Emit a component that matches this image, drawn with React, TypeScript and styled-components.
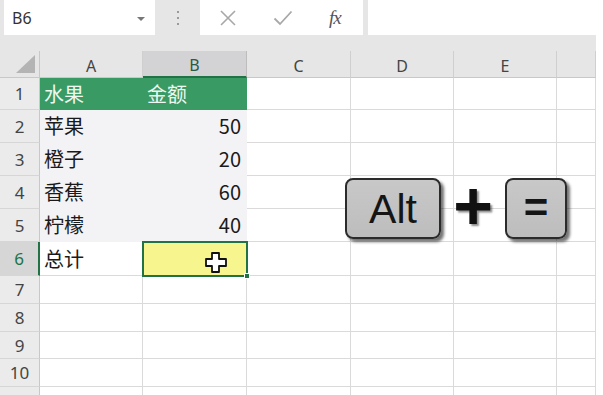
import React from "react";
import styled, { createGlobalStyle } from "styled-components";

const Global = createGlobalStyle`
  html, body { margin: 0; padding: 0; background: #ffffff; }
  body { width: 603px; height: 395px; overflow: hidden; font-family: "Noto Sans CJK SC", "Noto Sans", sans-serif; }
  * { box-sizing: border-box; }
`;

const GREEN = "#217346";

const Page = styled.div`
  position: relative;
  width: 596px;
  height: 395px;
  overflow: hidden;
  background: #ffffff;
`;

const Toolbar = styled.div`
  height: 51px;
  background: #e6e6e6;
  display: flex;
  align-items: flex-start;
  padding-left: 4px;
`;

const NameBox = styled.div`
  width: 151px;
  height: 35px;
  background: #ffffff;
  display: flex;
  align-items: center;
  justify-content: space-between;
  padding: 0 10px 0 8px;
  font-family: "Noto Sans", "Liberation Sans", sans-serif;
  font-size: 16px;
  color: #333;
`;

const Caret = styled.span`
  width: 0;
  height: 0;
  border-left: 4px solid transparent;
  border-right: 4px solid transparent;
  border-top: 4px solid #777;
  margin-top: 2px;
`;

const Grip = styled.div`
  width: 45px;
  height: 35px;
  display: flex;
  flex-direction: column;
  align-items: center;
  justify-content: center;
  gap: 4px;
`;

const GripDot = styled.span`
  width: 2px;
  height: 2px;
  background: #9a9a9a;
`;

const ButtonBox = styled.div`
  width: 163px;
  height: 35px;
  background: #ffffff;
  display: flex;
  align-items: center;
  padding-left: 17px;
  gap: 33px;
`;

const IconSlot = styled.span`
  width: 22px;
  height: 20px;
  display: flex;
  align-items: center;
  justify-content: center;
`;

const Fx = styled.span`
  font-family: "Liberation Serif", "DejaVu Serif", serif;
  font-style: italic;
  font-size: 19px;
  color: #555;
  margin-left: 2px;
  letter-spacing: -1px;
`;

const FormulaInput = styled.div`
  flex: 1;
  height: 35px;
  margin-left: 5px;
  background: #ffffff;
`;

const Sheet = styled.div`
  display: grid;
  grid-template-columns: 40px 103px 104px 104px 103px 103px 39px;
  grid-template-rows: 27px 32px 33px 33px 33px 33px 34px 28px 28px 27px 28px 20px;
  border-right: 1px solid #d4d4d4;
`;

const Corner = styled.div`
  background: #e6e6e6;
  border-right: 1px solid #c8c8c8;
  border-bottom: 1px solid #c8c8c8;
  display: flex;
  align-items: flex-end;
  justify-content: flex-end;
  padding: 0 4px 4px 0;
`;

const ColHead = styled.div<{ $active?: boolean }>`
  background: ${(p) => (p.$active ? "#d3d3d5" : "#e6e6e6")};
  border-right: 1px solid ${(p) => (p.$active ? "#bdbdbd" : "#cfcfcf")};
  border-bottom: ${(p) => (p.$active ? `2px solid ${GREEN}` : "1px solid #c8c8c8")};
  display: flex;
  align-items: flex-end;
  justify-content: center;
  padding-bottom: 1px;
  font-family: "Noto Sans", "Liberation Sans", sans-serif;
  font-size: 16px;
  line-height: 20px;
  color: ${(p) => (p.$active ? "#2c5a44" : "#444")};
`;

const RowHead = styled.div<{ $active?: boolean }>`
  background: ${(p) => (p.$active ? "#d6d6d6" : "#ebebeb")};
  border-right: ${(p) => (p.$active ? `2px solid ${GREEN}` : "1px solid #c8c8c8")};
  border-bottom: 1px solid #d6d6d6;
  display: flex;
  align-items: center;
  justify-content: center;
  font-family: "Noto Sans", "Liberation Sans", sans-serif;
  font-size: 17px;
  color: ${(p) => (p.$active ? GREEN : "#444")};
`;

type Fill = "none" | "header" | "band" | "yellow";

const fills: Record<Fill, string> = {
  none: "#ffffff",
  header: "#3a9a64",
  band: "#f3f3f5",
  yellow: "#f6f58e",
};

const Cell = styled.div<{ $fill?: Fill; $right?: boolean; $selected?: boolean }>`
  position: relative;
  background: ${(p) => fills[p.$fill || "none"]};
  border-right: 1px solid ${(p) => (p.$fill === "header" ? "#3a9a64" : p.$fill === "band" ? "#f3f3f5" : "#dadada")};
  border-bottom: 1px solid ${(p) => (p.$fill === "header" ? "#3a9a64" : p.$fill === "band" ? "#f3f3f5" : "#dadada")};
  display: flex;
  align-items: center;
  justify-content: ${(p) => (p.$right ? "flex-end" : "flex-start")};
  padding: 0 5px 0 4px;
  font-size: 20px;
  line-height: 24px;
  color: ${(p) => (p.$fill === "header" ? "#eef8f0" : "#1a1a1a")};
  white-space: nowrap;
  outline: ${(p) => (p.$selected ? `2px solid ${GREEN}` : "none")};
  outline-offset: -1px;
  z-index: ${(p) => (p.$selected ? 1 : 0)};
`;

const FillHandle = styled.span`
  position: absolute;
  right: -4px;
  bottom: -4px;
  width: 6px;
  height: 6px;
  background: ${GREEN};
  border: 1px solid #ffffff;
`;

const Cursor = styled.svg`
  position: absolute;
  left: 60px;
  top: 9px;
`;

const KeyRow = styled.div`
  position: absolute;
  left: 345px;
  top: 178px;
  display: flex;
  align-items: center;
`;

const Key = styled.div<{ $w: number }>`
  width: ${(p) => p.$w}px;
  height: 61px;
  background: linear-gradient(#c8c8c8, #bdbdbd);
  border: 2px solid #2b2b2b;
  border-radius: 8px;
  box-shadow: 3px 3px 3px rgba(0, 0, 0, 0.55);
  display: flex;
  align-items: center;
  justify-content: center;
  font-family: "Liberation Sans", Arial, sans-serif;
  color: #151515;
`;

const AltLabel = styled.span`
  font-size: 41px;
  line-height: 1;
  margin-top: 2px;
`;

const EqLabel = styled.span`
  font-size: 42px;
  font-weight: 700;
  line-height: 1;
  margin-top: -2px;
`;

const Plus = styled.span`
  width: 64px;
  text-align: center;
  font-family: "Liberation Sans", Arial, sans-serif;
  font-weight: 900;
  font-size: 68px;
  line-height: 1;
  color: #111;
  text-shadow: 2px 2px 2px rgba(0, 0, 0, 0.45);
  margin-top: -8px;
`;

const cols = ["A", "B", "C", "D", "E", ""];

const data: { a: string; b: string; fill: Fill }[] = [
  { a: "水果", b: "金额", fill: "header" },
  { a: "苹果", b: "50", fill: "band" },
  { a: "橙子", b: "20", fill: "band" },
  { a: "香蕉", b: "60", fill: "band" },
  { a: "柠檬", b: "40", fill: "band" },
  { a: "总计", b: "", fill: "none" },
];

export default function App() {
  const rows = [1, 2, 3, 4, 5, 6, 7, 8, 9, 10, 11];
  return (
    <Page>
      <Global />
      <Toolbar>
        <NameBox>
          <span>B6</span>
          <Caret />
        </NameBox>
        <Grip>
          <GripDot />
          <GripDot />
          <GripDot />
        </Grip>
        <ButtonBox>
          <IconSlot>
            <svg width="18" height="18" viewBox="0 0 18 18">
              <path d="M2 2 L16 16 M16 2 L2 16" stroke="#a8a8a8" strokeWidth="1.6" fill="none" />
            </svg>
          </IconSlot>
          <IconSlot>
            <svg width="20" height="16" viewBox="0 0 20 16">
              <path d="M1.5 8.5 L7 14 L18.5 1.5" stroke="#a8a8a8" strokeWidth="1.8" fill="none" />
            </svg>
          </IconSlot>
          <Fx>fx</Fx>
        </ButtonBox>
        <FormulaInput />
      </Toolbar>
      <Sheet>
        <Corner>
          <svg width="19" height="18" viewBox="0 0 19 18">
            <polygon points="19,0 19,18 0,18" fill="#b4b4b4" />
          </svg>
        </Corner>
        {cols.map((c, i) => (
          <ColHead key={i} $active={c === "B"}>
            {c}
          </ColHead>
        ))}
        {rows.map((r) => {
          const d = data[r - 1];
          return (
            <React.Fragment key={r}>
              <RowHead $active={r === 6}>{r <= 10 ? r : ""}</RowHead>
              <Cell $fill={d ? d.fill : "none"}>{d ? d.a : ""}</Cell>
              <Cell
                $fill={r === 6 ? "yellow" : d ? d.fill : "none"}
                $right={r !== 1}
                $selected={r === 6}
              >
                {d ? d.b : ""}
                {r === 6 && (
                  <>
                    <Cursor width="26" height="24" viewBox="0 0 26 24">
                      <path
                        d="M8 2 H15 V8 H22 V15 H15 V21 H8 V15 H2 V8 H8 Z"
                        fill="#fff"
                        stroke="#111"
                        strokeWidth="1.8"
                        strokeLinejoin="round"
                        transform="translate(1,0)"
                      />
                    </Cursor>
                    <FillHandle />
                  </>
                )}
              </Cell>
              <Cell />
              <Cell />
              <Cell />
              <Cell />
            </React.Fragment>
          );
        })}
      </Sheet>
      <KeyRow>
        <Key $w={96}>
          <AltLabel>Alt</AltLabel>
        </Key>
        <Plus>+</Plus>
        <Key $w={62}>
          <EqLabel>=</EqLabel>
        </Key>
      </KeyRow>
    </Page>
  );
}
